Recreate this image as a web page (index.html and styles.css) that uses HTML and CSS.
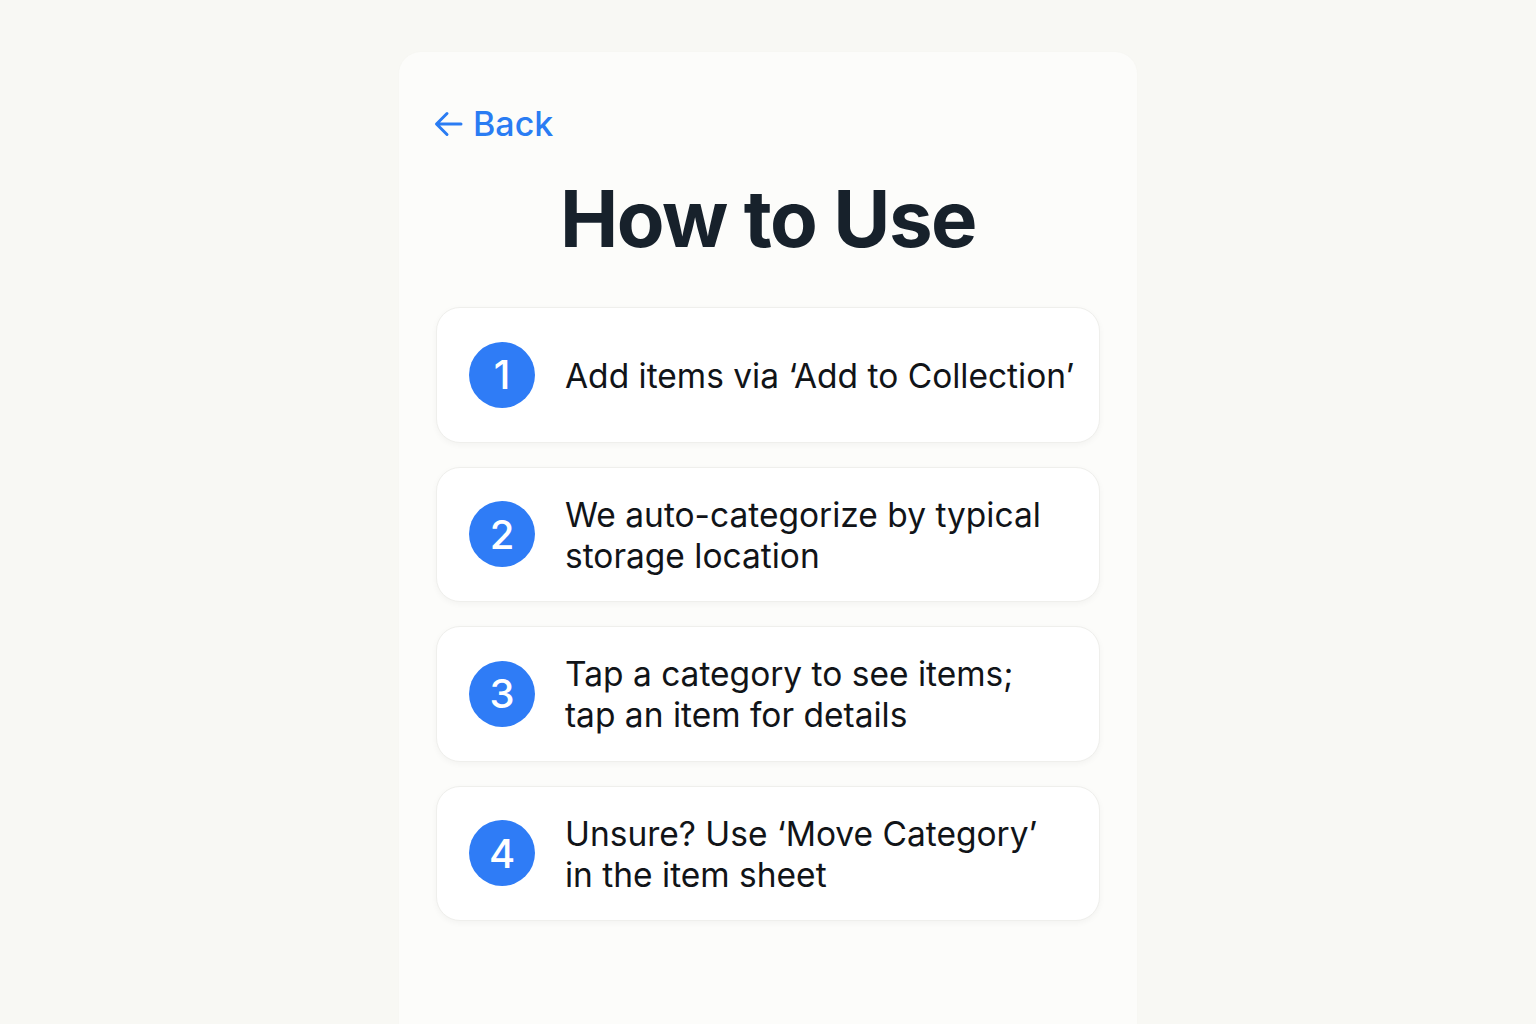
FILE: index.html
```html
<!DOCTYPE html>
<html lang="en">
<head>
<meta charset="utf-8">
<title>How to Use</title>
<link rel="stylesheet" href="styles.css">
</head>
<body>
<main class="panel">
  <a class="back" href="#">
    <svg class="back-icon" width="32" height="32" viewBox="0 0 32 32" aria-hidden="true">
      <path d="M29 16H5M15 5.5L4.5 16L15 26.5" fill="none" stroke="currentColor" stroke-width="3" stroke-linecap="round" stroke-linejoin="round"/>
    </svg>
    <span>Back</span>
  </a>
  <h1 class="title">How to Use</h1>
  <ol class="steps">
    <li class="step"><span class="num">1</span><p class="text">Add items via ‘Add to Collection’</p></li>
    <li class="step"><span class="num">2</span><p class="text">We auto-categorize by typical<br>storage location</p></li>
    <li class="step"><span class="num">3</span><p class="text">Tap a category to see items;<br>tap an item for details</p></li>
    <li class="step"><span class="num">4</span><p class="text">Unsure? Use ‘Move Category’<br>in the item sheet</p></li>
  </ol>
</main>
</body>
</html>
```

FILE: styles.css
```css
html, body {
  margin: 0;
  padding: 0;
}
body {
  background: #f8f8f4;
  font-family: Inter, "Noto Sans", "Liberation Sans", sans-serif;
  min-height: 1024px;
  overflow: hidden;
}
.panel {
  box-sizing: border-box;
  width: 738px;
  margin: 52px auto 0;
  min-height: 972px;
  background: #fcfcfa;
  border-radius: 22px 22px 0 0;
  padding: 52px 37px 40px;
  box-shadow: 0 0 3px rgba(0,0,0,0.02);
}
.back {
  display: inline-flex;
  align-items: center;
  gap: 9px;
  color: #2a7cf3;
  text-decoration: none;
  font-size: 34px;
  line-height: 40px;
  font-weight: 500;
}
.back-icon {
  margin-left: -4px;
}
.title {
  margin: 27px 0 0;
  text-align: center;
  font-size: 78px;
  line-height: 96px;
  font-weight: 700;
  color: #17212b;
  letter-spacing: -1.5px;
}
.steps {
  list-style: none;
  margin: 40px 0 0;
  padding: 0;
  display: flex;
  flex-direction: column;
  gap: 24px;
}
.step {
  box-sizing: border-box;
  height: 135.5px;
  display: flex;
  align-items: center;
  gap: 30px;
  padding: 3px 20px 0 32px;
  background: #ffffff;
  border: 1px solid #efefec;
  border-radius: 24px;
  box-shadow: 0 2px 6px rgba(0,0,0,0.04);
}
.num {
  flex: none;
  width: 66px;
  height: 66px;
  margin-top: -3px;
  border-radius: 50%;
  background: #2f7cf6;
  color: #ffffff;
  display: flex;
  align-items: center;
  justify-content: center;
  font-size: 40px;
  font-weight: 500;
}
.text {
  margin: 0;
  font-size: 33.5px;
  line-height: 41px;
  color: #111418;
  font-weight: 400;
}
```
